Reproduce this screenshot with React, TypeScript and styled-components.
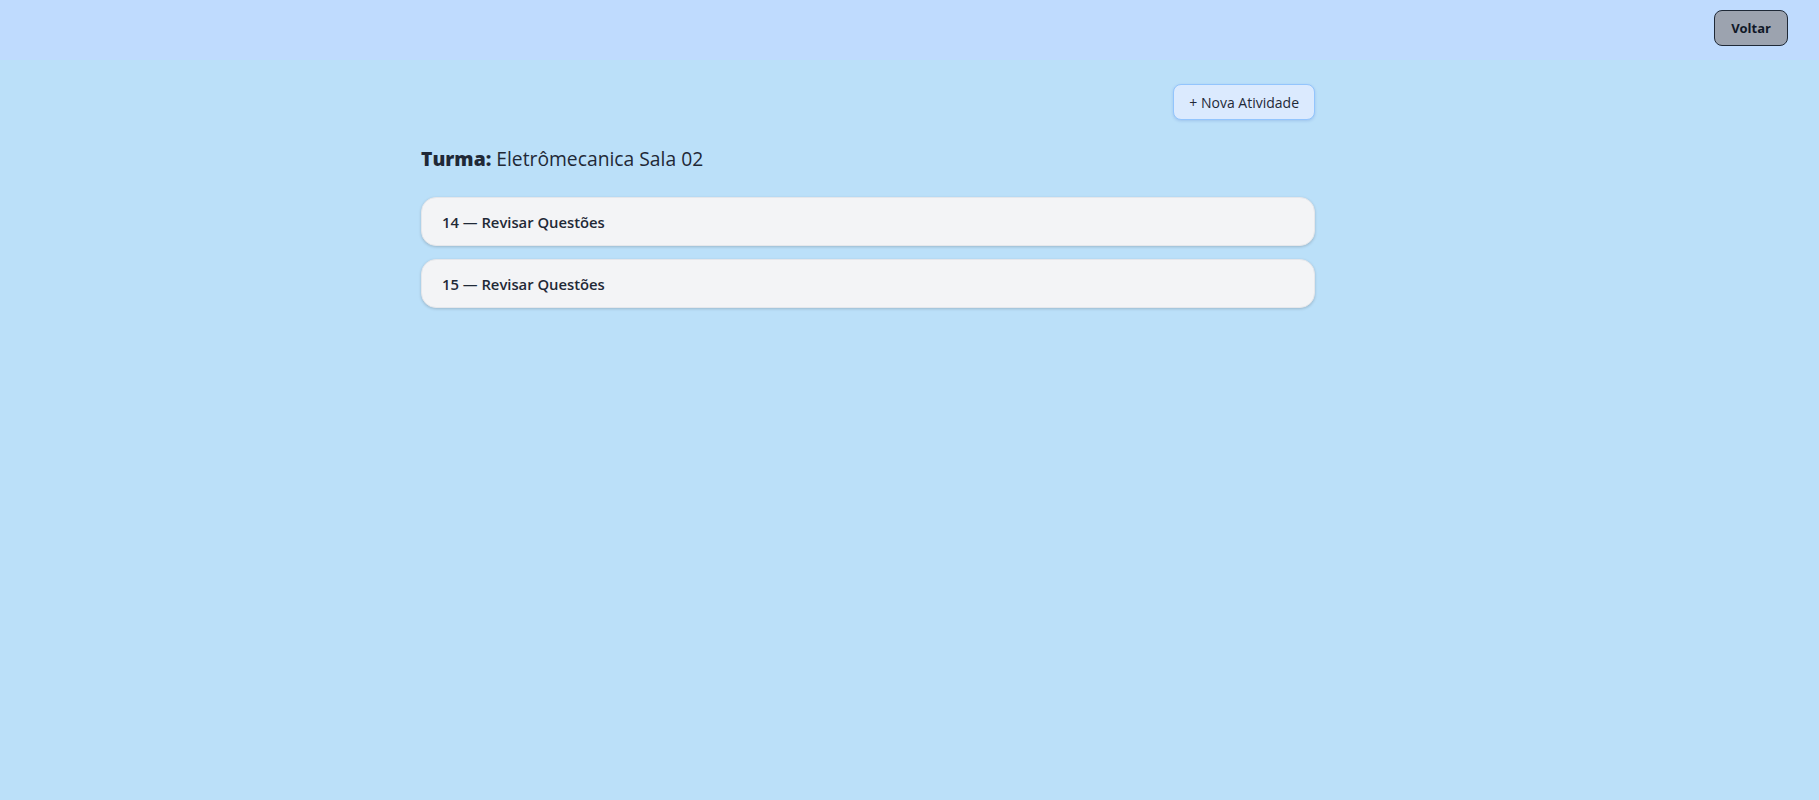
import React from "react";
import styled, { createGlobalStyle } from "styled-components";

const Global = createGlobalStyle`
  html, body { margin: 0; padding: 0; }
  body {
    background: #bbe0f9;
    font-family: "Open Sans", "Noto Sans", sans-serif;
    color: #1f2937;
    min-height: 800px;
  }
`;

const Page = styled.div`
  min-height: 800px;
  background: #bbe0f9;
`;

const Header = styled.header`
  height: 60px;
  background: #bfdbfe;
  display: flex;
  align-items: center;
  justify-content: flex-end;
  padding: 0 31px 4px 0;
  box-sizing: border-box;
`;

const BackButton = styled.button`
  height: 36px;
  padding: 0 16px;
  background: #9ca3af;
  border: 1px solid #1f2937;
  border-radius: 8px;
  font-family: inherit;
  font-size: 13px;
  font-weight: 700;
  color: #111827;
  cursor: pointer;
`;

const Main = styled.main`
  padding: 24px 83px 0 0;
`;

const Container = styled.div`
  max-width: 894px;
  margin: 0 auto;
  display: flex;
  flex-direction: column;
`;

const Toolbar = styled.div`
  display: flex;
  justify-content: flex-end;
`;

const NewButton = styled.button`
  height: 36px;
  padding: 0 15px;
  background: #dbeafe;
  border: 1px solid #93c5fd;
  border-radius: 8px;
  box-shadow: 0 1px 3px rgba(30, 64, 175, 0.18);
  font-family: inherit;
  font-size: 14px;
  font-weight: 500;
  color: #1f2937;
  cursor: pointer;
`;

const Title = styled.h2`
  margin: 25px 0 0 0;
  font-size: 19.3px;
  line-height: 28px;
  font-weight: 400;
  color: #1f2937;
`;

const Strong = styled.strong`
  font-weight: 800;
`;

const List = styled.ul`
  list-style: none;
  margin: 24px 0 0 0;
  padding: 0;
  display: flex;
  flex-direction: column;
  gap: 13px;
`;

const Card = styled.li`
  height: 49px;
  box-sizing: border-box;
  display: flex;
  align-items: center;
  padding: 0 20px;
  background: #f3f4f6;
  border: 1px solid #e5e7eb;
  border-radius: 15px;
  box-shadow: 0 1px 3px rgba(0, 0, 0, 0.18);
  font-size: 14.8px;
  font-weight: 600;
  color: #1f2937;
`;

const items = [
  { id: 14, name: "Revisar Questões" },
  { id: 15, name: "Revisar Questões" },
];

export default function App() {
  return (
    <Page>
      <Global />
      <Header>
        <BackButton>Voltar</BackButton>
      </Header>
      <Main>
        <Container>
          <Toolbar>
            <NewButton>+ Nova Atividade</NewButton>
          </Toolbar>
          <Title>
            <Strong>Turma:</Strong> Eletrômecanica Sala 02
          </Title>
          <List>
            {items.map((it) => (
              <Card key={it.id}>
                {it.id} — {it.name}
              </Card>
            ))}
          </List>
        </Container>
      </Main>
    </Page>
  );
}
